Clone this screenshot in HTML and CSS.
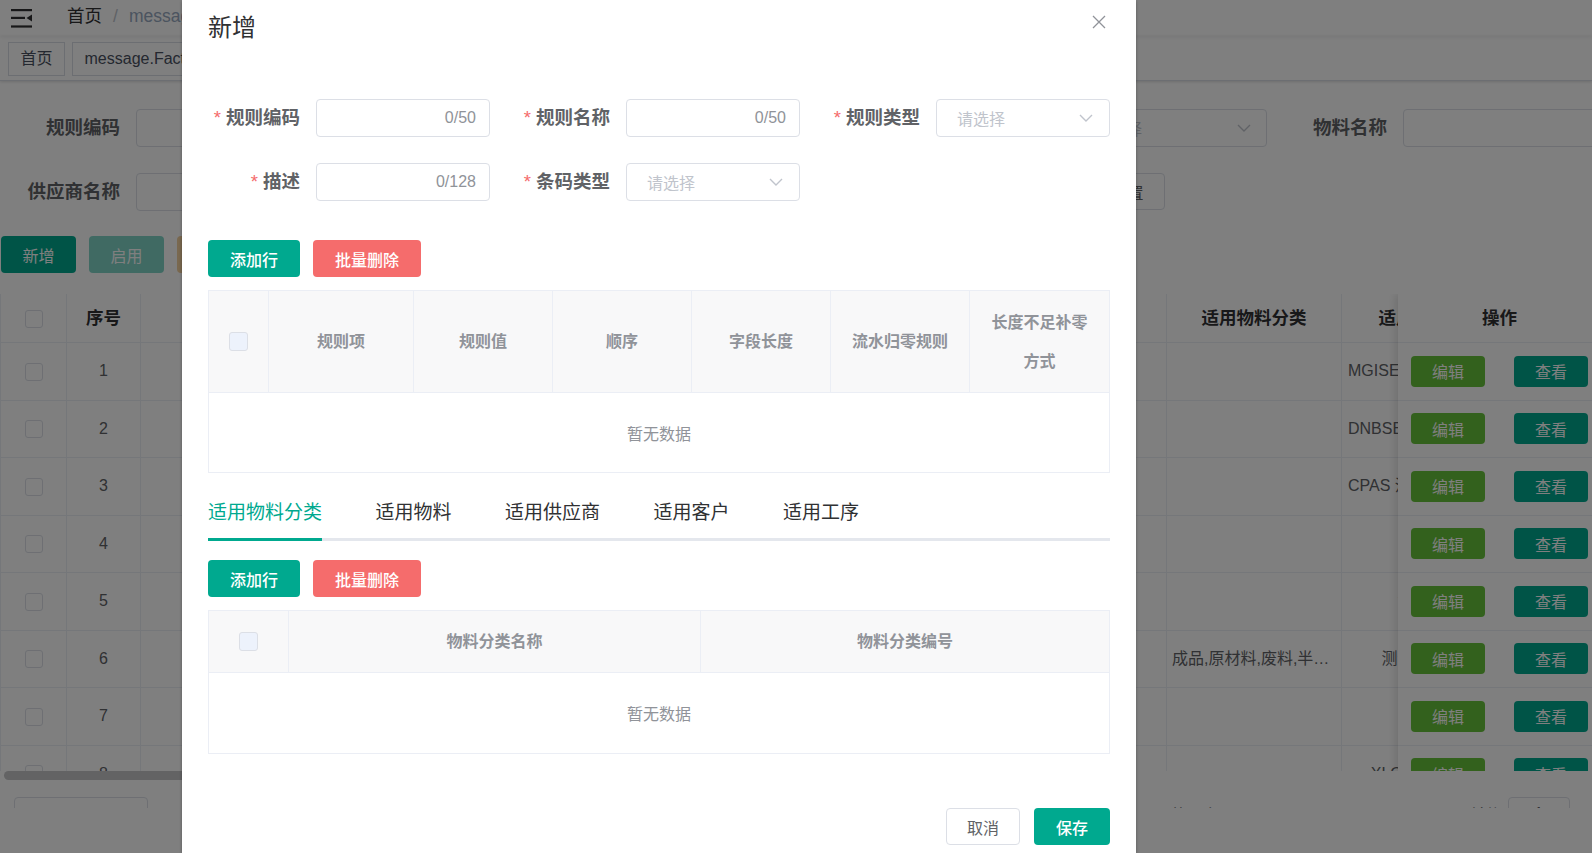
FILE: index.html
```html
<!DOCTYPE html>
<html lang="zh-CN">
<head>
<meta charset="utf-8">
<title>条码规则</title>
<link rel="stylesheet" href="styles.css">
</head>
<body>
<div class="app">
  <header class="navbar">
    <svg class="hamburger" width="21" height="19" viewBox="0 0 21 19"><rect x="0" y="0" width="21" height="2.2"/><rect x="0" y="7.8" width="14" height="2.2"/><polygon points="15.5,8.9 21,5.4 21,12.4"/><rect x="0" y="16.4" width="21" height="2.2"/></svg>
    <nav class="crumbs"><span class="crumb">首页</span><span class="sep">/</span><span class="crumb cur">message.FactoryBarcodeRule</span></nav>
  </header>
  <div class="tags">
    <span class="tag">首页</span>
    <span class="tag">message.FactoryBarcodeRule</span>
  </div>
  <main class="page">
    <div class="search">
      <div class="srow">
        <label class="slabel">规则编码</label><div class="sinput"></div>
        <label class="slabel">规则名称</label><div class="sinput"></div>
        <label class="slabel wide">规则类型</label><div class="sselect"><span>请选择</span><svg width="14" height="8" viewBox="0 0 14 8"><polyline points="1,1 7,7 13,1"/></svg></div>
        <label class="slabel">物料名称</label><div class="sinput"></div>
      </div>
      <div class="srow">
        <label class="slabel">供应商名称</label><div class="sinput"></div>
        <label class="slabel">物料编码</label><div class="sinput"></div>
        <div class="sbtns"><button class="bbtn teal">搜索</button><button class="bbtn plain">重置</button></div>
      </div>
    </div>
    <div class="toolbar">
      <button class="bbtn teal">新增</button>
      <button class="bbtn teal-off">启用</button>
      <button class="bbtn warn-off">禁用</button>
    </div>
    <div class="grid">
      <div class="grow ghead">
        <div class="gc c-chk"><span class="cb"></span></div>
        <div class="gc c-no">序号</div>
        <div class="gc c-mid">规则编码</div>
        <div class="gc c-mid">规则名称</div>
        <div class="gc c-mid">规则类型</div>
        <div class="gc c-mid">描述</div>
        <div class="gc c-mid">条码类型</div>
        <div class="gc c-mid">适用供应商</div>
        <div class="gc c-cat">适用物料分类</div>
        <div class="gc c-mat">适用物料</div>
        <div class="gc c-mid">适用客户</div>
      </div>
      <div class="grow"><div class="gc c-chk"><span class="cb"></span></div><div class="gc c-no">1</div><div class="gc c-mid">R0001</div><div class="gc c-mid">测序仪条码</div><div class="gc c-mid">物料条码</div><div class="gc c-mid">测序仪</div><div class="gc c-mid">一维码</div><div class="gc c-mid"></div><div class="gc c-cat"></div><div class="gc c-mat">MGISEQ-2000测序仪</div><div class="gc c-mid"></div></div>
      <div class="grow"><div class="gc c-chk"><span class="cb"></span></div><div class="gc c-no">2</div><div class="gc c-mid">R0002</div><div class="gc c-mid">测序仪条码</div><div class="gc c-mid">物料条码</div><div class="gc c-mid">测序仪</div><div class="gc c-mid">一维码</div><div class="gc c-mid"></div><div class="gc c-cat"></div><div class="gc c-mat">DNBSEQ-T7测序仪</div><div class="gc c-mid"></div></div>
      <div class="grow"><div class="gc c-chk"><span class="cb"></span></div><div class="gc c-no">3</div><div class="gc c-mid">R0003</div><div class="gc c-mid">试剂条码</div><div class="gc c-mid">物料条码</div><div class="gc c-mid">试剂</div><div class="gc c-mid">二维码</div><div class="gc c-mid"></div><div class="gc c-cat"></div><div class="gc c-mat">CPAS 注射液测序试剂盒</div><div class="gc c-mid"></div></div>
      <div class="grow"><div class="gc c-chk"><span class="cb"></span></div><div class="gc c-no">4</div><div class="gc c-mid">R0004</div><div class="gc c-mid">包装条码</div><div class="gc c-mid">包装条码</div><div class="gc c-mid">包装</div><div class="gc c-mid">一维码</div><div class="gc c-mid"></div><div class="gc c-cat"></div><div class="gc c-mat"></div><div class="gc c-mid"></div></div>
      <div class="grow"><div class="gc c-chk"><span class="cb"></span></div><div class="gc c-no">5</div><div class="gc c-mid">R0005</div><div class="gc c-mid">箱码</div><div class="gc c-mid">箱码</div><div class="gc c-mid">箱</div><div class="gc c-mid">一维码</div><div class="gc c-mid"></div><div class="gc c-cat"></div><div class="gc c-mat">测试</div><div class="gc c-mid"></div></div>
      <div class="grow"><div class="gc c-chk"><span class="cb"></span></div><div class="gc c-no">6</div><div class="gc c-mid">R0006</div><div class="gc c-mid">测试规则</div><div class="gc c-mid">物料条码</div><div class="gc c-mid">测试</div><div class="gc c-mid">二维码</div><div class="gc c-mid">测试</div><div class="gc c-cat">成品,原材料,废料,半成品</div><div class="gc c-mat">测试规则</div><div class="gc c-mid">测试</div></div>
      <div class="grow"><div class="gc c-chk"><span class="cb"></span></div><div class="gc c-no">7</div><div class="gc c-mid">R0007</div><div class="gc c-mid">追溯码</div><div class="gc c-mid">追溯码</div><div class="gc c-mid">追溯</div><div class="gc c-mid">二维码</div><div class="gc c-mid"></div><div class="gc c-cat"></div><div class="gc c-mat"></div><div class="gc c-mid"></div></div>
      <div class="grow"><div class="gc c-chk"><span class="cb"></span></div><div class="gc c-no">8</div><div class="gc c-mid">R0008</div><div class="gc c-mid">序列号</div><div class="gc c-mid">序列号</div><div class="gc c-mid">序列号</div><div class="gc c-mid">一维码</div><div class="gc c-mid"></div><div class="gc c-cat"></div><div class="gc c-mat">XLOG-2000</div><div class="gc c-mid"></div></div>
      <div class="gfixed">
        <div class="grow ghead"><div class="gc c-op">操作</div></div>
        <div class="grow"><div class="gc c-op"><button class="obtn green">编辑</button><button class="obtn teal">查看</button></div></div>
        <div class="grow"><div class="gc c-op"><button class="obtn green">编辑</button><button class="obtn teal">查看</button></div></div>
        <div class="grow"><div class="gc c-op"><button class="obtn green">编辑</button><button class="obtn teal">查看</button></div></div>
        <div class="grow"><div class="gc c-op"><button class="obtn green">编辑</button><button class="obtn teal">查看</button></div></div>
        <div class="grow"><div class="gc c-op"><button class="obtn green">编辑</button><button class="obtn teal">查看</button></div></div>
        <div class="grow"><div class="gc c-op"><button class="obtn green">编辑</button><button class="obtn teal">查看</button></div></div>
        <div class="grow"><div class="gc c-op"><button class="obtn green">编辑</button><button class="obtn teal">查看</button></div></div>
        <div class="grow"><div class="gc c-op"><button class="obtn green">编辑</button><button class="obtn teal">查看</button></div></div>
      </div>
    </div>
    <div class="hscroll"><div class="thumb"></div></div>
    <div class="pager">
      <div class="psize">10条/页</div>
      <span class="ptotal">共 8 条</span>
      <span class="pgo">前往</span>
      <div class="pjump">1</div>
    </div>
  </main>
</div>

<div class="mask"></div>

<div class="dialog">
  <div class="dlg-head">
    <span class="dlg-title">新增</span>
    <button class="dlg-close"><svg width="14" height="14" viewBox="0 0 14 14"><path d="M1 1L13 13M13 1L1 13"/></svg></button>
  </div>
  <div class="dlg-body">
    <div class="form">
      <div class="fitem"><label class="flabel">规则编码</label><div class="input"><span class="count">0/50</span></div></div>
      <div class="fitem"><label class="flabel">规则名称</label><div class="input"><span class="count">0/50</span></div></div>
      <div class="fitem"><label class="flabel">规则类型</label><div class="select"><span>请选择</span><svg width="14" height="8" viewBox="0 0 14 8"><polyline points="1,1 7,7 13,1"/></svg></div></div>
      <div class="fitem"><label class="flabel">描述</label><div class="input"><span class="count">0/128</span></div></div>
      <div class="fitem"><label class="flabel">条码类型</label><div class="select"><span>请选择</span><svg width="14" height="8" viewBox="0 0 14 8"><polyline points="1,1 7,7 13,1"/></svg></div></div>
    </div>

    <div class="actions first">
      <button class="btn teal">添加行</button>
      <button class="btn red">批量删除</button>
    </div>
    <div class="tbl t1">
      <div class="thead">
        <div class="th"><span class="chk"></span></div>
        <div class="th">规则项</div>
        <div class="th">规则值</div>
        <div class="th">顺序</div>
        <div class="th">字段长度</div>
        <div class="th">流水归零规则</div>
        <div class="th">长度不足补零方式</div>
      </div>
      <div class="tempty">暂无数据</div>
    </div>

    <div class="tabs">
      <div class="tab active">适用物料分类</div>
      <div class="tab">适用物料</div>
      <div class="tab">适用供应商</div>
      <div class="tab">适用客户</div>
      <div class="tab">适用工序</div>
    </div>

    <div class="actions">
      <button class="btn teal">添加行</button>
      <button class="btn red">批量删除</button>
    </div>
    <div class="tbl t2">
      <div class="thead">
        <div class="th"><span class="chk"></span></div>
        <div class="th">物料分类名称</div>
        <div class="th">物料分类编号</div>
      </div>
      <div class="tempty">暂无数据</div>
    </div>
  </div>
  <div class="dlg-foot">
    <button class="btn plain">取消</button>
    <button class="btn teal">保存</button>
  </div>
</div>
</body>
</html>
```
FILE: styles.css
```css
* { box-sizing: border-box; }

html, body {
  margin: 0;
  padding: 0;
}

body {
  width: 1592px;
  height: 853px;
  overflow: hidden;
  position: relative;
  background: #fff;
  font-family: "Liberation Sans", "Noto Sans CJK SC", sans-serif;
  color: #606266;
}

button {
  font-family: inherit;
  cursor: pointer;
}

/* ---------- background page ---------- */
.app {
  height: 853px;
}

.navbar {
  height: 36px;
  display: flex;
  align-items: center;
  padding-left: 11px;
  box-shadow: 0 1px 4px rgba(0, 21, 41, .08);
  position: relative;
}

.hamburger {
  fill: #303133;
  flex: none;
}

.crumbs {
  margin: 0 0 5px 35px;
  font-size: 17.5px;
  line-height: 22px;
  color: #303133;
  white-space: nowrap;
}

.sep {
  color: #c0c4cc;
  margin: 0 11px;
}

.crumb.cur {
  color: #97a8be;
}

.tags {
  height: 45px;
  display: flex;
  align-items: flex-start;
  gap: 7px;
  padding: 6px 0 0 8px;
  border-bottom: 1px solid #d8dce5;
  box-shadow: 0 1px 3px rgba(0, 0, 0, .12), 0 0 3px rgba(0, 0, 0, .04);
  white-space: nowrap;
}

.tag {
  height: 34px;
  line-height: 32px;
  border: 1px solid #d8dce5;
  padding: 0 11.5px;
  font-size: 16px;
  color: #495060;
}

.page {
  height: 727px;
  overflow: hidden;
  position: relative;
}

.search {
  padding-top: 28px;
}

.srow {
  display: flex;
  height: 38px;
  margin-bottom: 26px;
  white-space: nowrap;
}

.srow:last-child {
  margin-bottom: 0;
}

.slabel {
  flex: none;
  width: 136px;
  padding-right: 16px;
  text-align: right;
  line-height: 38px;
  font-size: 18.5px;
  font-weight: bold;
  color: #606266;
}

.slabel.wide {
  width: 229px;
}

.sinput {
  flex: none;
  width: 270px;
  height: 38px;
  border: 1px solid #dcdfe6;
  border-radius: 4px;
  margin-right: 16px;
}

.srow .sinput:last-child {
  width: 300px;
  margin-right: 0;
}

.sselect {
  flex: none;
  width: 194px;
  height: 38px;
  border: 1px solid #dcdfe6;
  border-radius: 4px;
  display: flex;
  align-items: center;
  padding: 0 15px 0 20px;
  font-size: 16px;
  color: #c0c4cc;
}

.sselect svg,
.select svg {
  margin-left: auto;
  fill: none;
  stroke: #c0c4cc;
  stroke-width: 1.4;
}

.sbtns {
  display: flex;
  gap: 14px;
  margin-left: 157px;
}

.bbtn {
  height: 37px;
  width: 75px;
  border: none;
  border-radius: 4px;
  font-size: 16px;
  color: #fff;
  padding: 0;
}

.bbtn.teal { background: #00a98f; }
.bbtn.teal-off { background: #80d4c7; }
.bbtn.warn-off { background: #f3d19e; }
.bbtn.plain { background: #fff; border: 1px solid #dcdfe6; color: #606266; }

.toolbar {
  display: flex;
  gap: 13px;
  padding: 25px 0 0 1px;
}

.grid {
  margin-top: 21px;
  height: 477px;
  overflow: hidden;
  position: relative;
  border-left: 1px solid #ebeef5;
}

.grow {
  display: flex;
  height: 57.5px;
  line-height: 56.5px;
  border-bottom: 1px solid #ebeef5;
}

.grow.ghead {
  height: 49px;
  line-height: 48px;
}

.gc {
  flex: none;
  border-right: 1px solid #ebeef5;
  padding: 0 6px;
  text-align: center;
  white-space: nowrap;
  overflow: hidden;
  text-overflow: ellipsis;
  font-size: 16px;
  color: #606266;
}

.ghead .gc {
  font-size: 17.5px;
  font-weight: bold;
  color: #303133;
}

.c-chk { width: 66px; }
.c-no { width: 74px; }
.c-mid { width: 171px; }
.c-cat { width: 175px; padding: 0 5px; }
.c-mat { width: 144px; }

.cb {
  display: inline-block;
  width: 18px;
  height: 18px;
  border: 1px solid #dcdfe6;
  border-radius: 3px;
  background: #fff;
  vertical-align: middle;
}

.gfixed {
  position: absolute;
  top: 0;
  left: 1397px;
  width: 203px;
  background: #fff;
  box-shadow: -3px 0 8px rgba(0, 0, 0, .12);
}

.c-op {
  width: 203px;
  display: flex;
  align-items: center;
  justify-content: center;
  gap: 29px;
  border-right: none;
}

.obtn {
  width: 74px;
  height: 31px;
  border: none;
  border-radius: 4px;
  font-size: 16px;
  color: #fff;
  padding: 0;
}

.obtn.green { background: #67c23a; }
.obtn.teal { background: #00a98f; }

.hscroll {
  height: 9px;
  padding-left: 4px;
}

.thumb {
  width: 900px;
  height: 9px;
  border-radius: 5px;
  background: #c6c7c9;
}

.pager {
  margin-top: 17px;
  display: flex;
  align-items: center;
  height: 34px;
  padding-left: 14px;
  font-size: 16px;
  color: #606266;
  white-space: nowrap;
}

.psize {
  width: 134px;
  height: 34px;
  border: 1px solid #dcdfe6;
  border-radius: 4px;
  line-height: 32px;
  padding-left: 12px;
  padding-top: 4px;
}

.ptotal {
  margin-left: 1022px;
}

.pgo {
  margin-left: 250px;
}

.pjump {
  margin-left: 6px;
  width: 62px;
  height: 34px;
  border: 1px solid #dcdfe6;
  border-radius: 4px;
  line-height: 32px;
  text-align: center;
}

/* ---------- overlay & dialog ---------- */
.mask {
  position: absolute;
  inset: 0;
  background: rgba(0, 0, 0, .5);
}

.dialog {
  position: absolute;
  left: 182px;
  top: 0;
  width: 954px;
  height: 853px;
  background: #fff;
  box-shadow: 0 1px 3px rgba(0, 0, 0, .3);
}

.dlg-head {
  position: relative;
  height: 44px;
  padding: 12px 26px 0;
}

.dlg-title {
  display: block;
  font-size: 24px;
  line-height: 32px;
  color: #303133;
}

.dlg-close {
  position: absolute;
  top: 15px;
  right: 30px;
  width: 14px;
  height: 14px;
  padding: 0;
  border: none;
  background: none;
}

.dlg-close svg {
  display: block;
  stroke: #909399;
  stroke-width: 1.3;
  fill: none;
}

.dlg-body {
  padding: 55px 26px 0;
}

.form {
  display: grid;
  grid-template-columns: repeat(3, 282px);
  column-gap: 28px;
  row-gap: 26px;
}

.fitem {
  display: flex;
}

.flabel {
  flex: none;
  width: 108px;
  padding-right: 16px;
  text-align: right;
  line-height: 38px;
  font-size: 18.5px;
  font-weight: bold;
  color: #606266;
  white-space: nowrap;
}

.flabel::before {
  content: "*";
  color: #f56c6c;
  margin-right: 5px;
  font-weight: normal;
}

.input,
.select {
  flex: none;
  width: 174px;
  height: 38px;
  border: 1px solid #dcdfe6;
  border-radius: 4px;
  display: flex;
  align-items: center;
  font-size: 16px;
}

.input {
  justify-content: flex-end;
  padding-right: 13px;
  color: #909399;
}

.select {
  padding: 0 16px 0 20px;
  color: #c0c4cc;
}

.actions {
  display: flex;
  gap: 13px;
}

.actions.first {
  margin-top: 39px;
}

.btn {
  height: 37px;
  padding: 0 22px;
  border: none;
  border-radius: 4px;
  font-size: 16px;
  font-weight: 500;
  color: #fff;
}

.btn.teal { background: #00a98f; }
.btn.red { background: #f56c6c; }
.btn.plain {
  background: #fff;
  border: 1px solid #dcdfe6;
  color: #606266;
  padding: 0 20px;
  font-weight: normal;
}

.tbl {
  margin-top: 13px;
  width: 902px;
  border: 1px solid #ebeef5;
}

.thead {
  display: grid;
  background: #f8f8f9;
  border-bottom: 1px solid #ebeef5;
}

.t1 .thead {
  grid-template-columns: 60px 145px 139px 139px 139px 139px 139px;
  height: 102px;
}

.t2 .thead {
  grid-template-columns: 80px 412px 408px;
  height: 62px;
}

.th {
  display: flex;
  align-items: center;
  justify-content: center;
  text-align: center;
  padding: 0 16px;
  line-height: 39px;
  font-size: 16px;
  font-weight: bold;
  color: #909399;
  border-right: 1px solid #ebeef5;
}

.th:last-child {
  border-right: none;
}

.chk {
  display: block;
  width: 19px;
  height: 19px;
  border: 1px solid #dcdfe6;
  border-radius: 3px;
  background: #edf2fc;
}

.tempty {
  height: 79px;
  display: flex;
  align-items: center;
  justify-content: center;
  font-size: 16px;
  color: #909399;
}

.t2 .tempty {
  height: 80px;
}

.tabs {
  margin-top: 15px;
  display: flex;
  height: 53px;
  border-bottom: 3px solid #e4e7ed;
}

.tab {
  position: relative;
  height: 50px;
  line-height: 50px;
  padding: 0 26.75px;
  font-size: 19px;
  color: #303133;
  white-space: nowrap;
}

.tab:first-child {
  padding-left: 0;
}

.tab.active {
  color: #00a98f;
}

.tab.active::after {
  content: "";
  position: absolute;
  left: 0;
  right: 26.75px;
  bottom: -3px;
  height: 3px;
  background: #00a98f;
}

.tabs + .actions {
  margin-top: 19px;
}

.dlg-foot {
  display: flex;
  justify-content: flex-end;
  gap: 14px;
  padding: 0 26px;
  margin-top: 54px;
}
```
